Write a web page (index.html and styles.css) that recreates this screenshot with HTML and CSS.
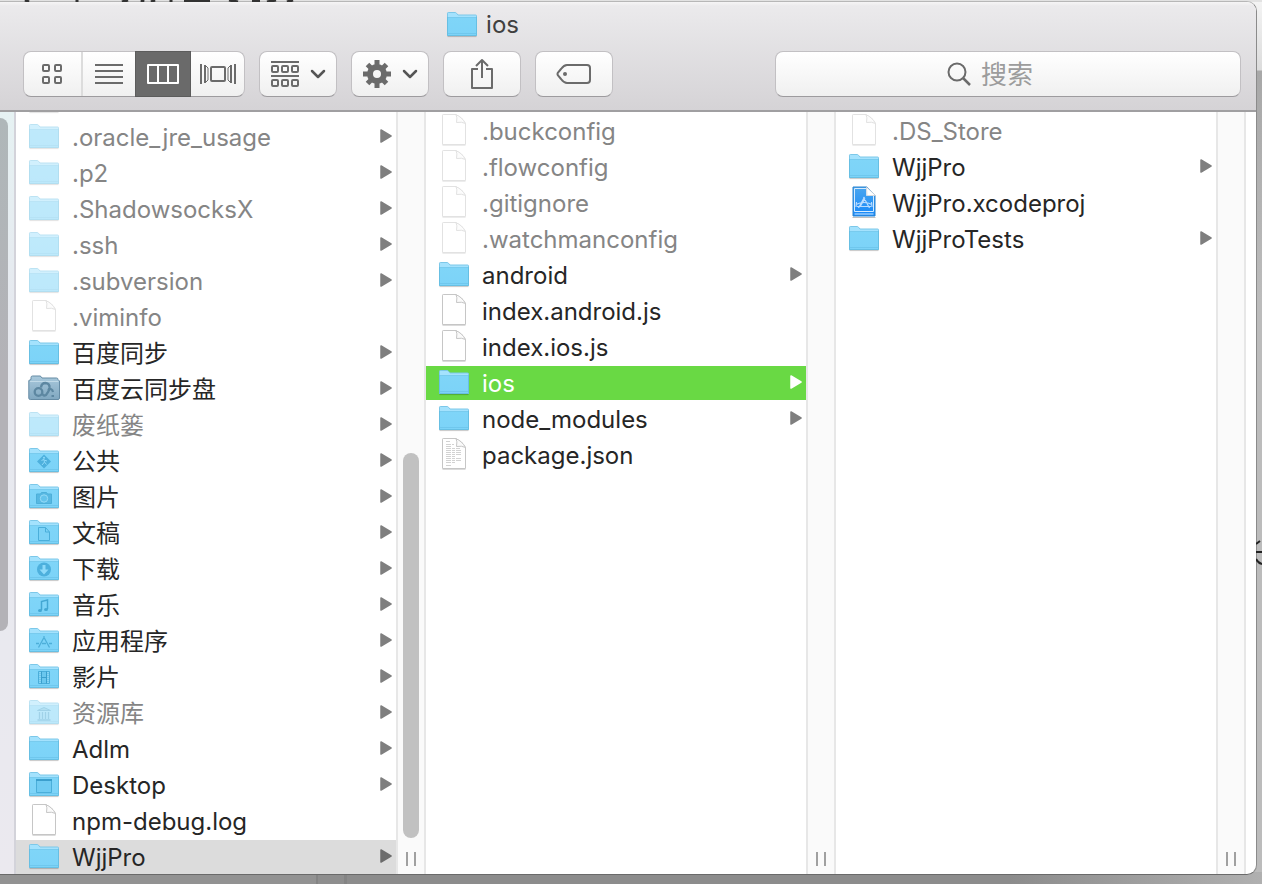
FILE: index.html
```
<!DOCTYPE html>
<html lang="zh-CN">
<head>
<meta charset="utf-8">
<title>ios</title>
<link rel="stylesheet" href="styles.css">
</head>
<body>
<svg class="defs" aria-hidden="true">
  <defs>
    <linearGradient id="front" x1="0" y1="0" x2="0" y2="1"><stop offset="0" stop-color="#7fd5f8"/><stop offset="1" stop-color="#7cd3f8"/></linearGradient>
    <linearGradient id="cloud-fill" x1="0" y1="0" x2="0" y2="1"><stop offset="0" stop-color="#a9c9dc"/><stop offset="1" stop-color="#80a7c0"/></linearGradient>
    <linearGradient id="xcode-fill" x1="0" y1="0" x2="0" y2="1"><stop offset="0" stop-color="#4ba6ee"/><stop offset="1" stop-color="#1588fa"/></linearGradient>
    <symbol id="folder" viewBox="0 0 32 32">
      <path d="M1.5 28.6h29" stroke="#000" stroke-opacity=".22"/>
      <path d="M1.5 27.5V5.2Q1.500 4.500 2.300 4.500H9.300Q10 4.500 10.500 5.200L12 7H29.700Q30.500 7 30.500 7.800V27.500Z" fill="#a4e2fd" stroke="#7cc8e9"/>
      <path d="M1.500 9.500H30.500V27.500H1.500Z" fill="url(#front)"/>
      <path d="M1.500 9.500H30.500M1.500 25.500H30.500" stroke="#68c0e6" stroke-opacity=".6"/>
      <path d="M1.500 9V27.500H30.500V9" fill="none" stroke="#67bfe3"/>
    </symbol>
    <symbol id="doc" viewBox="0 0 32 32">
      <path d="M4.500 31.500H27.500" stroke="#000" stroke-opacity=".14"/>
      <path d="M4.500 1.200Q4.500.5 5.200.5H18Q24 3 27.500 9.500V30.500H4.500Z" fill="#fff" stroke="#c6c6c6"/>
      <path d="M18 .8Q19.500 3 18.500 8.500Q24 7.500 27.500 9.500Q24 3 18 .8Z" fill="#fafafa" stroke="#c6c6c6"/>
    </symbol>
    <symbol id="textdoc" viewBox="0 0 32 32">
      <use href="#doc"/>
      <path d="M8 3.500H12M8 6.500H16M8 8.500H14M8 10.500H22M8 12.500H24M8 14.500H23M8 16.500H24M8 18.500H17M8 20.500H23M8 22.500H24M8 24.500H18M8 27.500H13" stroke="#d2d2d2" stroke-dasharray="5 1 3 1"/>
    </symbol>
    <symbol id="xcode" viewBox="0 0 32 32">
      <path d="M4.500 31.500H27.500" stroke="#000" stroke-opacity=".25"/>
      <path d="M5 1H19L27 9.500V30H5Z" fill="url(#xcode-fill)" stroke="#2b83cf"/>
      <path d="M6.500 2.500H18.500V9.500H25.500V25.500H6.500ZM6.500 28H25.500" fill="none" stroke="#d5ebff"/>
      <path d="M18.500 1L19 9.500H27.500Z" fill="#fff" stroke="#d0d0d0" stroke-width=".7"/>
      <path d="M10.500 22L16.500 11M15.500 11L21.500 22M12.500 20L17 12.500M8 18.500Q16 14.500 24 18.500M9 20.500H23M8.500 16L8 21M23.500 16L24 21" fill="none" stroke="#b9dcff" stroke-width="1.200"/>
    </symbol>
    <symbol id="cloud" viewBox="0 0 32 32">
      <path d="M.8 8.500L3 7.500V5.500Q3 4 4.500 4H12Q13 4 14 6H28.500Q30 6 30 7.500L31.500 9V26Q31.500 27.500 30 27.500H2.300Q.8 27.500.8 26Z" fill="url(#cloud-fill)" stroke="#658ba4"/>
      <path d="M2 9.500H30.500" stroke="#d0e4ef" stroke-opacity=".7"/>
      <g fill="none" stroke="#5d87a1" stroke-width="2.300"><circle cx="10.500" cy="20" r="3.800"/><path d="M13 15.500Q13.500 11 17.500 11Q22 11.500 21.500 16Q21 19.500 18 23Q15.500 24.500 14 21.500"/><path d="M20 18Q24 15.500 25 20"/></g><path d="M23.500 24h2.500" stroke="#5d87a1" stroke-width="2"/>
    </symbol>
    <symbol id="public" viewBox="0 0 32 32"><use href="#folder"/><path d="M16 10.500L23 17.500L16 24.500L9 17.500Z" fill="#4db0dd"/><circle cx="16" cy="13.800" r="1" fill="#8edafa"/><path d="M13.500 17L15.500 15L16.500 18L14 21M16.500 18L18.500 20.500M16 16L19 17" fill="none" stroke="#8edafa"/></symbol>
    <symbol id="pictures" viewBox="0 0 32 32"><use href="#folder"/><path d="M8.500 14H12.500L13.500 12.500H18.500L19.500 14H23.500V23.500H8.500Z" fill="#57b8e2" stroke="#4dafd9"/><circle cx="16" cy="18.500" r="3.700" fill="#64c3eb" stroke="#96dbf7"/></symbol>
    <symbol id="documents" viewBox="0 0 32 32"><use href="#folder"/><path d="M10.500 11.500H17.500L21.500 16V24.500H10.500ZM17.500 11.500V16H21.500" fill="#7cd2f6" stroke="#4aaeda"/></symbol>
    <symbol id="downloads" viewBox="0 0 32 32"><use href="#folder"/><circle cx="16" cy="17.500" r="7" fill="#4db0dd"/><path d="M14.500 13H17.500V17.500H20.500L16 22.500L11.500 17.500H14.500Z" fill="#8edafa"/></symbol>
    <symbol id="music" viewBox="0 0 32 32"><use href="#folder"/><path d="M13.500 22V13.500L19.500 12V21" fill="none" stroke="#43a7d3" stroke-width="1.500"/><ellipse cx="12" cy="22.500" rx="2" ry="1.500" fill="#43a7d3"/><ellipse cx="18" cy="21.500" rx="2" ry="1.500" fill="#43a7d3"/></symbol>
    <symbol id="apps" viewBox="0 0 32 32"><use href="#folder"/><path d="M10.500 23.500L16.500 12.500M15.500 12.500L21.500 23.500M8 19.500H11M14 19.500H18M21 19.500H24" fill="none" stroke="#4dafd9" stroke-width="1.300"/></symbol>
    <symbol id="movies" viewBox="0 0 32 32"><use href="#folder"/><path d="M10.500 11.500H21.500V23.500H10.500Z" fill="#6ac7ee" stroke="#4aaeda"/><path d="M13.500 11.500V23.500M18.500 11.500V23.500M13.500 17.500H18.500" stroke="#3b9fcd"/><path d="M12 12V23M20 12V23" stroke="#a8e3fb" stroke-dasharray="1 1"/></symbol>
    <symbol id="library" viewBox="0 0 32 32"><use href="#folder"/><path d="M9.500 14.500L16 11.500L22.500 14.500Z" fill="#67c0e5" stroke="#43a7d3"/><path d="M11.500 16V23M14.500 16V23M17.500 16V23M20.500 16V23M9.500 24H22.500" stroke="#43a7d3" stroke-width="1.300"/></symbol>
    <symbol id="desktop" viewBox="0 0 32 32"><use href="#folder"/><path d="M8.500 12.500H23.500V24.500H8.500Z" fill="#6fcbf2" stroke="#4aaeda"/><path d="M8 12H24" stroke="#3b9fcd" stroke-width="2"/></symbol>
    <symbol id="arrow" viewBox="0 0 12 16"><path d="M1 1L11 7L1 13Z" fill="currentColor" stroke="currentColor" stroke-width="1.500" stroke-linejoin="round"/></symbol>
    <symbol id="chevron" viewBox="0 0 16 10"><path d="M2 2L8 8L14 2" fill="none" stroke="#555" stroke-width="2.500" stroke-linecap="round" stroke-linejoin="round"/></symbol>
  </defs>
</svg>

<svg class="behind behind-top" width="320" height="2" viewBox="0 0 320 2" aria-hidden="true"><path d="M25 0L29 2M77 0V2M122 2L128 0M141 0L144 2M151 2L155 0M171 0V2M184 1H210M229 0L238 2M252 1H260M267 2L276 0M287 2L293 0" stroke="#333" stroke-width="3"/></svg>
<svg class="behind behind-side" width="6" height="32" viewBox="0 0 6 32" aria-hidden="true"><path d="M0 4L4 1M0 12H6M0 19Q2 23 6 24" fill="none" stroke="#222" stroke-width="2"/></svg>

<main class="window">
  <header class="chrome">
    <h1 class="title"><svg class="icon"><use href="#folder"/></svg>ios</h1>
    <div class="toolbar">
      <div class="views">
        <button class="view wide" aria-label="图标"><svg width="22" height="22" viewBox="0 0 22 22" fill="none" stroke="#6b6b6b" stroke-width="2"><rect x="1" y="2" width="6" height="6" rx="1"/><rect x="13" y="2" width="6" height="6" rx="1"/><rect x="1" y="14" width="6" height="6" rx="1"/><rect x="13" y="14" width="6" height="6" rx="1"/></svg></button>
        <button class="view list" aria-label="列表"><svg width="28" height="22" viewBox="0 0 28 22"><path d="M0 2H28M0 8H28M0 14H28M0 20H28" stroke="#6b6b6b" stroke-width="2"/></svg></button>
        <button class="view current" aria-label="分栏" aria-pressed="true"><svg width="32" height="22" viewBox="0 0 32 22"><path d="M1 2H31V20H1ZM11 2V20M21 2V20" fill="none" stroke="#fff" stroke-width="2" stroke-linejoin="round"/></svg></button>
        <button class="view" aria-label="封面流"><svg width="36" height="22" viewBox="0 0 36 22" fill="none" stroke="#6b6b6b"><path d="M1 1V21M35 1V21" stroke-width="2"/><path d="M5 2V20M31 2V20" stroke-width="2"/><path d="M5 2L8 5V17L5 20M31 2L28 5V17L31 20"/><rect x="11" y="4" width="14" height="14" rx="1" stroke-width="2"/></svg></button>
      </div>
      <button class="tool" aria-label="排列"><svg width="28" height="28" viewBox="0 0 28 28" fill="none" stroke="#6b6b6b" stroke-width="2"><path d="M0 2H28M0 16H28"/><rect x="1" y="6" width="6" height="6" rx="1"/><rect x="11" y="6" width="6" height="6" rx="1"/><rect x="21" y="6" width="6" height="6" rx="1"/><rect x="1" y="20" width="6" height="6" rx="1"/><rect x="11" y="20" width="6" height="6" rx="1"/><rect x="21" y="20" width="6" height="6" rx="1"/></svg><svg width="16" height="10"><use href="#chevron"/></svg></button>
      <button class="tool" aria-label="操作"><svg width="28" height="28" viewBox="0 0 28 28"><circle cx="14" cy="14" r="7" fill="none" stroke="#6b6b6b" stroke-width="6"/><g stroke="#6b6b6b" stroke-width="5"><path d="M14 0V5M14 23V28M0 14H5M23 14H28M4.500 4.500L8 8M20 20L23.500 23.500M23.500 4.500L20 8M8 20L4.500 23.500"/></g></svg><svg width="16" height="10"><use href="#chevron"/></svg></button>
      <button class="tool" aria-label="共享"><svg width="24" height="32" viewBox="0 0 24 32"><path d="M8 11H2V30H22V11H16M12 20V2M6 8L12 2L18 8" fill="none" stroke="#6b6b6b" stroke-width="2" stroke-linejoin="round"/></svg></button>
      <button class="tool" aria-label="标记"><svg width="36" height="22" viewBox="0 0 36 22"><path d="M11 2H31Q34 2 34 5V17Q34 20 31 20H11Q8 20 5 16L2 12.500Q1 11 2 9.500L5 6Q8 2 11 2Z" fill="none" stroke="#6b6b6b" stroke-width="2"/><circle cx="9" cy="11" r="2" fill="#6b6b6b"/></svg></button>
      <label class="search"><svg width="24" height="24" viewBox="0 0 24 24" fill="none" stroke="#6b6b6b"><circle cx="10" cy="10" r="8.500" stroke-width="2"/><path d="M16 16L23 23" stroke-width="2.500"/></svg><input type="search" placeholder="搜索" aria-label="搜索"></label>
    </div>
  </header>

  <div class="browser">
    <div class="sidebar"><div class="sidebar-thumb"></div></div>
    <ul class="column scrolled">
      <li><button class="row dim"><svg class="icon"><use href="#folder"/></svg></button></li>
      <li><button class="row dim"><svg class="icon"><use href="#folder"/></svg><span>.oracle_jre_usage</span><svg class="arrow"><use href="#arrow"/></svg></button></li>
      <li><button class="row dim"><svg class="icon"><use href="#folder"/></svg><span>.p2</span><svg class="arrow"><use href="#arrow"/></svg></button></li>
      <li><button class="row dim"><svg class="icon"><use href="#folder"/></svg><span>.ShadowsocksX</span><svg class="arrow"><use href="#arrow"/></svg></button></li>
      <li><button class="row dim"><svg class="icon"><use href="#folder"/></svg><span>.ssh</span><svg class="arrow"><use href="#arrow"/></svg></button></li>
      <li><button class="row dim"><svg class="icon"><use href="#folder"/></svg><span>.subversion</span><svg class="arrow"><use href="#arrow"/></svg></button></li>
      <li><button class="row dim"><svg class="icon"><use href="#doc"/></svg><span>.viminfo</span></button></li>
      <li><button class="row"><svg class="icon"><use href="#folder"/></svg><span>百度同步</span><svg class="arrow"><use href="#arrow"/></svg></button></li>
      <li><button class="row"><svg class="icon"><use href="#cloud"/></svg><span>百度云同步盘</span><svg class="arrow"><use href="#arrow"/></svg></button></li>
      <li><button class="row dim"><svg class="icon"><use href="#folder"/></svg><span>废纸篓</span><svg class="arrow"><use href="#arrow"/></svg></button></li>
      <li><button class="row"><svg class="icon"><use href="#public"/></svg><span>公共</span><svg class="arrow"><use href="#arrow"/></svg></button></li>
      <li><button class="row"><svg class="icon"><use href="#pictures"/></svg><span>图片</span><svg class="arrow"><use href="#arrow"/></svg></button></li>
      <li><button class="row"><svg class="icon"><use href="#documents"/></svg><span>文稿</span><svg class="arrow"><use href="#arrow"/></svg></button></li>
      <li><button class="row"><svg class="icon"><use href="#downloads"/></svg><span>下载</span><svg class="arrow"><use href="#arrow"/></svg></button></li>
      <li><button class="row"><svg class="icon"><use href="#music"/></svg><span>音乐</span><svg class="arrow"><use href="#arrow"/></svg></button></li>
      <li><button class="row"><svg class="icon"><use href="#apps"/></svg><span>应用程序</span><svg class="arrow"><use href="#arrow"/></svg></button></li>
      <li><button class="row"><svg class="icon"><use href="#movies"/></svg><span>影片</span><svg class="arrow"><use href="#arrow"/></svg></button></li>
      <li><button class="row dim"><svg class="icon"><use href="#library"/></svg><span>资源库</span><svg class="arrow"><use href="#arrow"/></svg></button></li>
      <li><button class="row"><svg class="icon"><use href="#folder"/></svg><span>Adlm</span><svg class="arrow"><use href="#arrow"/></svg></button></li>
      <li><button class="row"><svg class="icon"><use href="#desktop"/></svg><span>Desktop</span><svg class="arrow"><use href="#arrow"/></svg></button></li>
      <li><button class="row"><svg class="icon"><use href="#doc"/></svg><span>npm-debug.log</span></button></li>
      <li><button class="row opened"><svg class="icon"><use href="#folder"/></svg><span>WjjPro</span><svg class="arrow"><use href="#arrow"/></svg></button></li>
    </ul>
    <div class="gutter"><div class="thumb"></div><div class="grip"></div></div>
    <ul class="column">
      <li><button class="row dim"><svg class="icon"><use href="#doc"/></svg><span>.buckconfig</span></button></li>
      <li><button class="row dim"><svg class="icon"><use href="#doc"/></svg><span>.flowconfig</span></button></li>
      <li><button class="row dim"><svg class="icon"><use href="#doc"/></svg><span>.gitignore</span></button></li>
      <li><button class="row dim"><svg class="icon"><use href="#doc"/></svg><span>.watchmanconfig</span></button></li>
      <li><button class="row"><svg class="icon"><use href="#folder"/></svg><span>android</span><svg class="arrow"><use href="#arrow"/></svg></button></li>
      <li><button class="row"><svg class="icon"><use href="#doc"/></svg><span>index.android.js</span></button></li>
      <li><button class="row"><svg class="icon"><use href="#doc"/></svg><span>index.ios.js</span></button></li>
      <li><button class="row selected"><svg class="icon"><use href="#folder"/></svg><span>ios</span><svg class="arrow"><use href="#arrow"/></svg></button></li>
      <li><button class="row"><svg class="icon"><use href="#folder"/></svg><span>node_modules</span><svg class="arrow"><use href="#arrow"/></svg></button></li>
      <li><button class="row"><svg class="icon"><use href="#textdoc"/></svg><span>package.json</span></button></li>
    </ul>
    <div class="gutter"><div class="grip"></div></div>
    <ul class="column">
      <li><button class="row dim"><svg class="icon"><use href="#doc"/></svg><span>.DS_Store</span></button></li>
      <li><button class="row"><svg class="icon"><use href="#folder"/></svg><span>WjjPro</span><svg class="arrow"><use href="#arrow"/></svg></button></li>
      <li><button class="row"><svg class="icon"><use href="#xcode"/></svg><span>WjjPro.xcodeproj</span></button></li>
      <li><button class="row"><svg class="icon"><use href="#folder"/></svg><span>WjjProTests</span><svg class="arrow"><use href="#arrow"/></svg></button></li>
    </ul>
    <div class="gutter"><div class="grip"></div></div>
  </div>
</main>
</body>
</html>
```
FILE: styles.css
```
* { box-sizing: border-box; }

body {
  margin: 0;
  height: 100vh;
  padding: 1px 5px 9px 0;
  display: flex;
  overflow: hidden;
  position: relative;
  background:
    linear-gradient(#e2e2e2, #e2e2e2) top / 100% 2px no-repeat,
    linear-gradient(90deg, #929292, #929292 316px, #848484 316px, #848484 318px, #8e8e8e 318px, #8e8e8e 344px, #848484 344px, #848484 347px, #8c8c8c 347px, #8c8c8c 80%, #b0b0b0) bottom / 100% 12px no-repeat,
    linear-gradient(#f4f4f4, #dcdcdc 70px, #a8a8a8 71px, #bcbcbc 300px, #bcbcbc);
  font-family: Inter, "Noto Sans CJK SC", sans-serif;
  font-size: 24px;
  color: #262626;
}

button, input { font: inherit; color: inherit; }
button { margin: 0; padding: 0; border: 0; background: none; }
svg { display: block; flex: none; }

.defs { position: absolute; width: 0; height: 0; }
.behind { position: absolute; z-index: 1; }
.behind-top { top: 0; left: 0; }
.behind-side { top: 540px; right: 0; }

.window {
  flex: 1;
  min-width: 0;
  display: flex;
  flex-direction: column;
  position: relative;
  overflow: hidden;
  border: solid #8b8b8b;
  border-width: 1px 1px 1px 0;
  border-top-color: #b7b7b7;
  border-bottom-color: #6a6a6a;
  border-radius: 0 10px 10px 0;
  background: #fff;
}

.chrome {
  flex: none;
  padding: 6px 15px 13px 23px;
  border-bottom: 2px solid #a09fa1;
  background: linear-gradient(#f6f5f6, #ebeaec 4px, #d5d3d6);
}

.title {
  margin: 0 299px 0 0;
  height: 32px;
  display: flex;
  justify-content: center;
  align-items: center;
  gap: 8px;
  font-size: 24px;
  font-weight: 400;
  color: #404040;
}

.toolbar { margin-top: 11px; display: flex; gap: 14px; }

.views, .tool, .search {
  height: 46px;
  border: 1px solid #c2c0c3;
  border-bottom-color: #9d9b9e;
  border-radius: 8px;
  background: linear-gradient(#fff, #f0f0f0);
}

.views { display: flex; }
.view {
  width: 53px;
  display: flex;
  align-items: center;
  justify-content: center;
}
.view.wide { width: 59px; border-right: 2px solid #dcdcdc; }
.view.list { width: 52px; }
.view.current { width: 56px; margin: -1px 0; background: #6a6a6a; border: 1px solid #5c5c5c; }

.tool {
  width: 78px;
  display: flex;
  align-items: center;
  justify-content: center;
  gap: 11px;
}

.search {
  flex: 1;
  margin-left: 148px;
  display: flex;
  align-items: center;
  justify-content: center;
  gap: 10px;
}
.search input {
  width: 88px;
  padding: 0;
  border: 0;
  outline: 0;
  background: none;
  font-size: 26px;
}
.search input::placeholder { color: #9c9c9c; opacity: 1; }

.browser { flex: 1; min-height: 0; display: flex; padding-right: 10px; }

.sidebar {
  flex: 0 0 16px;
  padding-top: 6px;
  border-right: 2px solid #d3d3da;
  background: linear-gradient(#e6f2f3, #e6e9ef 200px, #ebe9ef);
}
.sidebar-thumb {
  width: 8px;
  height: 513px;
  border-radius: 0 8px 8px 0;
  background: linear-gradient(#afb7b9, #b3b2b7 50%);
}

.column {
  flex: 1;
  min-width: 0;
  margin: 0;
  padding: 2px 0 0;
  list-style: none;
  display: flex;
  flex-direction: column;
  gap: 2px;
  overflow: hidden;
}
.column.scrolled { padding: 0; justify-content: flex-end; }

.row {
  width: 100%;
  height: 34px;
  padding: 0 4px 0 12px;
  display: flex;
  align-items: center;
  gap: 12px;
  text-align: left;
  line-height: 34px;
  white-space: nowrap;
}
.row span { padding-top: 2px; }
.column li { flex: none; }
.icon { width: 32px; height: 32px; }
.row .icon { align-self: flex-start; }
.arrow { width: 12px; height: 16px; margin-left: auto; color: #7f7f7f; }
.row.dim { color: #858585; }
.row.dim .icon { opacity: .5; }
.row.opened { background: #dcdcdc; }
.opened .arrow { color: #6c6c6c; }
.row.selected { background: #69d944; color: #fff; }
.selected .arrow { color: #fff; }

.gutter {
  flex: 0 0 30px;
  padding-bottom: 8px;
  display: flex;
  flex-direction: column;
  justify-content: flex-end;
  align-items: center;
  gap: 14px;
  border: solid #e7e7e7;
  border-width: 0 2px;
  background: #fafafa;
}
.thumb { width: 16px; height: 385px; border-radius: 8px; background: #c1c1c1; }
.grip { width: 10px; height: 14px; border: solid #a0a0a0; border-width: 0 2px; }
```
